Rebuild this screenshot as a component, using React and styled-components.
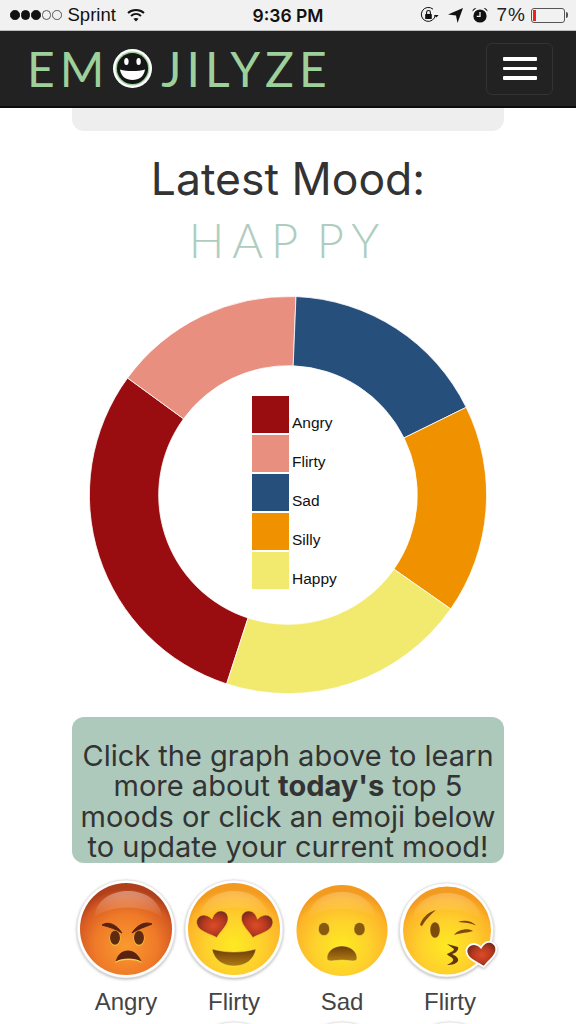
import React from 'react';
import styled, { createGlobalStyle } from 'styled-components';

const GlobalStyle = createGlobalStyle`
  html, body {
    margin: 0;
    padding: 0;
    background: #fff;
    font-family: "Liberation Sans", Arial, sans-serif;
  }
`;

const Page = styled.div`
  height: 1024px;
  overflow: hidden;
  color: #333;
`;

/* status bar */
const StatusBar = styled.div`
  height: 31px;
  box-sizing: border-box;
  background: #f1f1f1;
  border-bottom: 1px solid #bdbdbd;
  display: grid;
  grid-template-columns: 1fr auto 1fr;
  align-items: center;
  font-size: 18.5px;
  color: #111;
`;

const StatusLeft = styled.div`
  display: flex;
  align-items: center;
  padding-left: 10px;
`;

const StatusRight = styled.div`
  display: flex;
  align-items: center;
  justify-content: flex-end;
  padding-right: 9px;
`;

const Dots = styled.div`
  display: flex;
  gap: 1px;
  margin-right: 6px;
`;

const Dot = styled.span`
  width: 9.5px;
  height: 9.5px;
  box-sizing: border-box;
  border-radius: 50%;
  border: 1px solid ${props => (props.$on ? '#111' : '#555')};
  background: ${props => (props.$on ? '#111' : 'transparent')};
`;

const Carrier = styled.span`
  margin-right: 11px;
`;

const Clock = styled.span`
  font-family: Inter, "Liberation Sans", sans-serif;
  font-weight: 600;
  font-size: 17.5px;
`;

const StatusIcon = styled.svg`
  display: block;
  margin-right: ${props => props.$gap || 0}px;
`;

const Percent = styled.span`
  font-size: 19px;
  letter-spacing: 1px;
  color: #222;
  margin-right: 5px;
  margin-left: -1px;
`;

const Battery = styled.div`
  position: relative;
  width: 34px;
  height: 15px;
  box-sizing: border-box;
  border: 1px solid #555;
  border-radius: 3px;
  padding: 1px;
  margin-right: 2px;
  &::after {
    content: '';
    position: absolute;
    right: -4px;
    top: 3px;
    width: 2px;
    height: 6px;
    background: #555;
    border-radius: 0 2px 2px 0;
  }
`;

const BatteryLevel = styled.div`
  width: 2.5px;
  height: 100%;
  background: #e8261f;
`;

/* navbar */
const Navbar = styled.nav`
  height: 77px;
  box-sizing: border-box;
  background: #222;
  border-bottom: 2px solid #0c0c0c;
  display: flex;
  align-items: center;
  justify-content: space-between;
  padding: 0 23px 0 27px;
`;

const Brand = styled.div`
  display: flex;
  align-items: center;
  color: #9dd09b;
  font-family: Lato, "Liberation Sans", sans-serif;
  font-weight: 400;
  font-size: 48px;
  line-height: 1;
`;

const BrandText = styled.span`
  letter-spacing: ${props => props.$spacing}px;
`;

const BrandFace = styled.svg`
  display: block;
  margin: 0 8px 0 3px;
`;

const MenuButton = styled.button`
  width: 67px;
  height: 52px;
  box-sizing: border-box;
  background: transparent;
  border: 1px solid #333;
  border-radius: 6px;
  display: flex;
  flex-direction: column;
  align-items: center;
  justify-content: center;
  gap: 6px;
  padding: 0;
`;

const MenuBar = styled.span`
  display: block;
  width: 34px;
  height: 3.4px;
  background: #fff;
  border-radius: 1px;
`;

/* content */
const Content = styled.main`
  width: 432px;
  margin: 0 auto;
`;

const TopPanel = styled.div`
  height: 23px;
  background: #eee;
  border-radius: 0 0 12px 12px;
`;

const Title = styled.h1`
  margin: 23px 0 0;
  font-family: Inter, "Liberation Sans", sans-serif;
  font-size: 44.5px;
  line-height: 50px;
  font-weight: 400;
  text-align: center;
  color: #333;
`;

const Mood = styled.div`
  margin-top: 8px;
  font-family: Lato, "Liberation Sans", sans-serif;
  font-weight: 300;
  font-size: 47px;
  line-height: 56px;
  letter-spacing: 8px;
  word-spacing: -9px;
  text-align: center;
  color: #aecdbf;
`;

const ChartWrap = styled.div`
  position: relative;
  width: 398px;
  height: 398px;
  margin: 28px auto 0;
`;

const ChartSvg = styled.svg`
  display: block;
`;

const Legend = styled.ul`
  position: absolute;
  left: 163px;
  top: 100px;
  margin: 0;
  padding: 0;
  list-style: none;
  display: flex;
  flex-direction: column;
  gap: 2px;
`;

const LegendRow = styled.li`
  display: flex;
  align-items: flex-end;
  gap: 3px;
  height: 37px;
  font-size: 15.5px;
  line-height: 21px;
  color: #111;
`;

const Swatch = styled.span`
  width: 37px;
  height: 37px;
  background: ${props => props.$color};
`;

const Info = styled.p`
  margin: 23px 0 0;
  height: 146px;
  box-sizing: border-box;
  padding-top: 24px;
  background: #adc9bb;
  border-radius: 12px;
  font-family: Inter, "Liberation Sans", sans-serif;
  font-size: 29px;
  line-height: 30.4px;
  text-align: center;
  color: #333;
`;

const EmojiGrid = styled.div`
  display: grid;
  grid-template-columns: repeat(4, 108px);
  row-gap: 0;
  margin-top: 12px;
`;

const EmojiCell = styled.div`
  display: flex;
  flex-direction: column;
  align-items: center;
  height: 142px;
`;

const EmojiLabel = styled.span`
  font-size: 24px;
  line-height: 28px;
  color: #444;
  margin-top: 5px;
`;

const EmojiSvg = styled.svg`
  display: block;
  flex: none;
  filter: ${props => (props.$ring ? 'drop-shadow(0 1px 1.5px rgba(0,0,0,.3))' : 'none')};
`;

const segments = [
  { label: 'Angry', color: '#990d10', from: 198, to: 306.1 },
  { label: 'Flirty', color: '#e98f80', from: 306.1, to: 362.3 },
  { label: 'Sad', color: '#264f7c', from: 2.3, to: 63.8 },
  { label: 'Silly', color: '#f09200', from: 63.8, to: 125 },
  { label: 'Happy', color: '#f2e96f', from: 125, to: 198 },
];

const polar = (r, deg) => {
  const a = (deg * Math.PI) / 180;
  return [199 + r * Math.sin(a), 199 - r * Math.cos(a)];
};

const arcPath = (from, to) => {
  const R = 198.6;
  const r = 129.3;
  const [x1, y1] = polar(R, from);
  const [x2, y2] = polar(R, to);
  const [x3, y3] = polar(r, to);
  const [x4, y4] = polar(r, from);
  const large = to - from > 180 ? 1 : 0;
  return `M${x1} ${y1}A${R} ${R} 0 ${large} 1 ${x2} ${y2}L${x3} ${y3}A${r} ${r} 0 ${large} 0 ${x4} ${y4}Z`;
};

const HEART = 'M0 13C-6 7 -16 3 -16 -5C-16 -11 -9 -14 -5 -11C-3 -10 -1 -8 0 -6C1 -8 3 -10 5 -11C9 -14 16 -11 16 -5C16 3 6 7 0 13Z';

const FaceDefs = ({ id, angry }) => (
  <defs>
    <radialGradient id={`${id}-face`} cx="50%" cy="68%" r="62%">
      {angry ? (
        <>
          <stop offset="0%" stopColor="#fa9a30" />
          <stop offset="55%" stopColor="#ef7a28" />
          <stop offset="85%" stopColor="#d65a22" />
          <stop offset="100%" stopColor="#b0401c" />
        </>
      ) : (
        <>
          <stop offset="0%" stopColor="#fdea22" />
          <stop offset="50%" stopColor="#fed02c" />
          <stop offset="85%" stopColor="#fdb428" />
          <stop offset="100%" stopColor="#f39a20" />
        </>
      )}
    </radialGradient>
    <linearGradient id={`${id}-gloss`} x1="0" y1="0" x2="0" y2="1">
      <stop offset="0%" stopColor="#fff" stopOpacity={angry ? '.38' : '.24'} />
      <stop offset="100%" stopColor="#fff" stopOpacity="0" />
    </linearGradient>
    <radialGradient id={`${id}-heart`} cx="50%" cy="50%" r="58%">
      <stop offset="0%" stopColor="#dd4c28" />
      <stop offset="55%" stopColor="#b83a20" />
      <stop offset="100%" stopColor="#7a2a1c" />
    </radialGradient>
    <linearGradient id={`${id}-mouth`} x1="0" y1="0" x2="0" y2="1">
      <stop offset="0%" stopColor="#6d3c08" />
      <stop offset="100%" stopColor="#b07c12" />
    </linearGradient>
  </defs>
);

const Gloss = ({ id, cx, cy, angry }) => (
  <path
    d={`M${cx - 34} ${cy - 12}C${cx - 32} ${cy - 32} ${cx - 14} ${cy - 39} ${cx} ${cy - 39}C${cx + 14} ${cy - 39} ${cx + 32} ${cy - 32} ${cx + 34} ${cy - 12}C${cx + 18} ${cy - 26} ${cx - 18} ${cy - 26} ${cx - 34} ${cy - 12}Z`}
    fill={`url(#${id}-gloss)`}
    opacity={angry ? 1 : 0.9}
  />
);

const AngryFace = () => (
  <>
    <FaceDefs id="angry" angry />
    <circle cx="54" cy="54" r="49" fill="#fff" stroke="#ddd" strokeWidth=".6" />
    <circle cx="54" cy="54" r="46" fill="url(#angry-face)" />
    <Gloss id="angry" cx={56} cy={55} angry />
    <path d="M30 50C36 46 44 49 50 58C44 54 37 52 30 50Z" fill="#5a2210" stroke="#5a2210" strokeWidth="1" strokeLinejoin="round" />
    <path d="M80 49C73 46 65 50 60 58C66 54 73 52 80 49Z" fill="#5a2210" stroke="#5a2210" strokeWidth="1" strokeLinejoin="round" />
    <ellipse cx="43" cy="63.5" rx="5.6" ry="7.6" fill="#f6c02c" />
    <ellipse cx="67" cy="63.5" rx="5.6" ry="7.6" fill="#f6c02c" />
    <ellipse cx="43" cy="62.8" rx="5" ry="7" fill="#5f2b10" />
    <ellipse cx="67" cy="62.8" rx="5" ry="7" fill="#5f2b10" />
    <path d="M43 88C46 80 50 76 56 76C62 76 67 81 70 88C64 84 49 84 43 88Z" fill="#f6cf4c" />
    <path d="M43.5 86.5C46 79 50 75.5 56 75.5C62 75.5 67 80 69.5 86.5C63 82.5 50 82.5 43.5 86.5Z" fill="#5a2210" />
  </>
);

const LoveFace = () => (
  <>
    <FaceDefs id="love" />
    <circle cx="54" cy="54" r="49" fill="#fff" stroke="#ddd" strokeWidth=".6" />
    <circle cx="54" cy="54" r="46" fill="url(#love-face)" />
    <Gloss id="love" cx={54} cy={55} />
    <path d={HEART} transform="translate(33.5 50) rotate(-14)" fill="url(#love-heart)" stroke="#f6c52c" strokeWidth=".6" />
    <path d={HEART} transform="translate(76 50) rotate(14)" fill="url(#love-heart)" stroke="#f6c52c" strokeWidth=".6" />
    <path d="M32 74C46 78 62 78 76 74C74 85 65 91 54 91C43 91 34 85 32 74Z" fill="url(#love-mouth)" stroke="#fbe35a" strokeWidth=".5" />
  </>
);

const SadFace = () => (
  <>
    <FaceDefs id="sad" />
    <circle cx="54" cy="55.5" r="45.5" fill="url(#sad-face)" />
    <Gloss id="sad" cx={54} cy={56} />
    <ellipse cx="36" cy="54" rx="5.6" ry="6.6" fill="#8a5a0c" stroke="#fbe35a" strokeWidth=".5" />
    <ellipse cx="71.5" cy="54" rx="5.6" ry="6.6" fill="#8a5a0c" stroke="#fbe35a" strokeWidth=".5" />
    <path d="M39 83C39 76 46 71 54 71C62 71 69 76 69 83C69 87 65 86 54 85C43 86 39 87 39 83Z" fill="url(#sad-mouth)" stroke="#fbe35a" strokeWidth=".5" />
  </>
);

const KissFace = () => (
  <>
    <FaceDefs id="kiss" />
    <circle cx="50.5" cy="55" r="47" fill="#fff" stroke="#ddd" strokeWidth=".6" />
    <circle cx="51" cy="55.5" r="44" fill="url(#kiss-face)" />
    <Gloss id="kiss" cx={51} cy={57} />
    <path d="M24 50C26 43 32 37 40 35C35 39 30 44 26 51Z" fill="#7d4c0c" />
    <ellipse cx="39" cy="55" rx="5" ry="8" fill="#7d4c0c" stroke="#fbe35a" strokeWidth=".4" />
    <path d="M62 47C68 44.500 76 45.500 80 50.500C75 48 69 47.500 62 47Z" fill="#7d4c0c" />
    <path d="M58 60C62 54.500 72 52.500 77 56C73 57.500 64 58 58 60Z" fill="#7d4c0c" />
    <path d="M51 69L62 72C63 75 60 78 56 79C60 81 63 83 62 86C60 89 56 90 51 90C55 88 58 86 57 84C55 81 52 81 51 79C55 77 58 76 58 74C56 72 53 71 51 69Z" fill="#5f360a" />
    <path d={HEART} transform="translate(86 79.500) rotate(-8) scale(.88)" fill="url(#kiss-heart)" stroke="#fff" strokeWidth="4" paintOrder="stroke" strokeLinejoin="round" />
  </>
);

const BlankFace = () => <circle cx="54" cy="54" r="49" fill="#fff" stroke="#ddd" strokeWidth=".6" />;

const faces = { angry: AngryFace, love: LoveFace, sad: SadFace, kiss: KissFace, blank: BlankFace };

const Emoji = ({ kind }) => {
  const Face = faces[kind];
  return (
    <EmojiSvg $ring={kind !== 'sad'} width="108" height="108" viewBox="0 0 108 108">
      <Face />
    </EmojiSvg>
  );
};

const moods = [
  { kind: 'angry', label: 'Angry' },
  { kind: 'love', label: 'Flirty' },
  { kind: 'sad', label: 'Sad' },
  { kind: 'kiss', label: 'Flirty' },
];

const WifiIcon = () => (
  <StatusIcon width="18" height="14" viewBox="0 0 18 14" fill="none" stroke="#111" strokeWidth="2">
    <path d="M1 5C5.5 1 12.5 1 17 5" />
    <path d="M4 8C7 5.4 11 5.4 14 8" />
    <path d="M9 13.5L6.4 10.8C8 9.6 10 9.6 11.6 10.8Z" fill="#111" stroke="none" />
  </StatusIcon>
);

const RotationLockIcon = () => (
  <StatusIcon $gap={9} width="19" height="16" viewBox="0 0 19 16" fill="none">
    <path d="M15.3 8A7 7 0 1 1 13 2.2" stroke="#111" strokeWidth="1" />
    <path d="M14 8L18.6 8L16.3 10.5Z" fill="#111" />
    <rect x="5.2" y="7" width="6.6" height="5" rx=".6" fill="#111" />
    <path d="M6.6 7V5.4A1.9 1.9 0 0 1 10.4 5.4V7" stroke="#111" strokeWidth="1.1" />
  </StatusIcon>
);

const ArrowIcon = () => (
  <StatusIcon $gap={9} width="15" height="15" viewBox="0 0 15 15">
    <path d="M15 0L9.5 15L8 7.4L0 6.4Z" fill="#111" />
  </StatusIcon>
);

const AlarmIcon = () => (
  <StatusIcon $gap={10} width="16" height="16" viewBox="0 0 16 16">
    <circle cx="8" cy="9" r="6.6" fill="#111" />
    <path d="M8 5V9.4H4.8" stroke="#f1f1f1" strokeWidth="1.3" fill="none" />
    <path d="M0.4 4.4C0.6 2.2 2.4 0.8 4.4 1Z" fill="#111" />
    <path d="M15.6 4.4C15.4 2.2 13.6 0.8 11.6 1Z" fill="#111" />
  </StatusIcon>
);

const LogoFace = () => (
  <BrandFace width="41" height="41" viewBox="0 0 41 41">
    <circle cx="20.5" cy="20.5" r="19.500" fill="#fff" />
    <circle cx="20.5" cy="20.5" r="17" fill="#9dd09b" />
    <circle cx="20.5" cy="20.5" r="15.600" fill="#161616" />
    <ellipse cx="14.4" cy="13.500" rx="2.2" ry="3.6" fill="#fff" />
    <ellipse cx="26.6" cy="13.500" rx="2.2" ry="3.6" fill="#fff" />
    <path d="M8 21.5C15 23.5 26 23.5 33 21.5C32 28.500 27 32 20.5 32C14 32 9 28.500 8 21.5Z" fill="#fff" />
  </BrandFace>
);

export default function App() {
  return (
    <Page>
      <GlobalStyle />
      <StatusBar>
        <StatusLeft>
          <Dots>
            {[1, 1, 1, 0, 0].map((on, i) => (
              <Dot key={i} $on={!!on} />
            ))}
          </Dots>
          <Carrier>Sprint</Carrier>
          <WifiIcon />
        </StatusLeft>
        <Clock>9:36 PM</Clock>
        <StatusRight>
          <RotationLockIcon />
          <ArrowIcon />
          <AlarmIcon />
          <Percent>7%</Percent>
          <Battery>
            <BatteryLevel />
          </Battery>
        </StatusRight>
      </StatusBar>

      <Navbar>
        <Brand>
          <BrandText $spacing={5}>EM</BrandText>
          <LogoFace />
          <BrandText $spacing={5}>JILYZE</BrandText>
        </Brand>
        <MenuButton aria-label="Menu">
          <MenuBar />
          <MenuBar />
          <MenuBar />
        </MenuButton>
      </Navbar>

      <Content>
        <TopPanel />
        <Title>Latest Mood:</Title>
        <Mood>HAP PY</Mood>

        <ChartWrap>
          <ChartSvg width="398" height="398" viewBox="0 0 398 398">
            {segments.map(s => (
              <path key={s.label} d={arcPath(s.from, s.to)} fill={s.color} stroke="#fff" strokeWidth=".8" />
            ))}
          </ChartSvg>
          <Legend>
            {segments.map(s => (
              <LegendRow key={s.label}>
                <Swatch $color={s.color} />
                {s.label}
              </LegendRow>
            ))}
          </Legend>
        </ChartWrap>

        <Info>
          Click the graph above to learn more about <strong>today's</strong> top 5 moods or click an emoji below to update your current mood!
        </Info>

        <EmojiGrid>
          {moods.map((m, i) => (
            <EmojiCell key={i}>
              <Emoji kind={m.kind} />
              <EmojiLabel>{m.label}</EmojiLabel>
            </EmojiCell>
          ))}
          <EmojiCell />
          {[0, 1, 2].map(i => (
            <EmojiCell key={i}>
              <Emoji kind="blank" />
            </EmojiCell>
          ))}
        </EmojiGrid>
      </Content>
    </Page>
  );
}
